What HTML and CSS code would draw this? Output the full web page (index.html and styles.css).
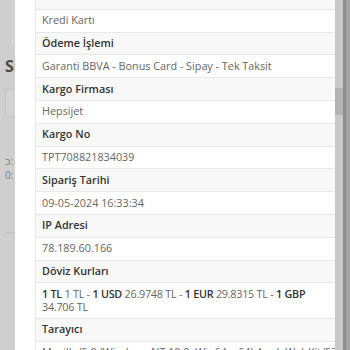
FILE: index.html
```html
<!DOCTYPE html>
<html lang="tr">
<head>
<meta charset="utf-8">
<link rel="stylesheet" href="styles.css">
</head>
<body>
<div class="screen">
  <aside class="under">
    <div class="under-top"></div>
    <div class="under-title">Sipariş</div>
    <div class="under-input"></div>
    <div class="under-line first">ɔ:</div>
    <div class="under-line">0:</div>
    <div class="under-box"></div>
  </aside>
  <section class="modal">
    <table class="details">
      <tr class="lbl cut"><th>Ödeme Yöntemi</th></tr>
      <tr><td>Kredi Kartı</td></tr>
      <tr class="lbl"><th>Ödeme İşlemi</th></tr>
      <tr><td>Garanti BBVA - Bonus Card - Sipay - Tek Taksit</td></tr>
      <tr class="lbl"><th>Kargo Firması</th></tr>
      <tr><td>Hepsijet</td></tr>
      <tr class="lbl"><th>Kargo No</th></tr>
      <tr><td>TPT708821834039</td></tr>
      <tr class="lbl"><th>Sipariş Tarihi</th></tr>
      <tr><td>09-05-2024 16:33:34</td></tr>
      <tr class="lbl"><th>IP Adresi</th></tr>
      <tr><td>78.189.60.166</td></tr>
      <tr class="lbl"><th>Döviz Kurları</th></tr>
      <tr><td class="rates"><b>1 TL</b> 1 TL - <b>1 USD</b> 26.9748 TL - <b>1 EUR</b> 29.8315 TL - <b>1 GBP</b><br>34.706 TL</td></tr>
      <tr class="lbl"><th>Tarayıcı</th></tr>
      <tr><td>Mozilla/5.0 (Windows NT 10.0; Win64; x64) AppleWebKit/537.36</td></tr>
    </table>
  </section>
  <div class="scroll">
    <div class="track"><div class="thumb"></div></div>
    <div class="outer"></div>
  </div>
</div>
</body>
</html>
```

FILE: styles.css
```css
* { box-sizing: border-box; }
html, body { margin: 0; padding: 0; }
body {
  font-family: "Open Sans", "DejaVu Sans", sans-serif;
  background: #cfcfcf;
}
.screen {
  display: flex;
  width: 350px;
  height: 350px;
  overflow: hidden;
}
.under {
  width: 15px;
  flex: none;
  overflow: hidden;
  background: #cfcfcf;
  padding-left: 5px;
  white-space: nowrap;
}
.under-top {
  height: 45px;
  margin-left: 7px;
  border-left: 1px solid #d9d9d9;
}
.under-title {
  margin-top: 12px;
  font-size: 16px;
  font-weight: 700;
  color: #4a4a4a;
  line-height: 18px;
}
.under-input {
  margin-top: 14px;
  height: 28px;
  border: 1px solid #c4c4c4;
  background: #d2d2d2;
  width: 40px;
}
.under-line {
  font-size: 10px;
  color: #808080;
  line-height: 14px;
}
.under-line.first { margin-top: 37px; }
.under-box {
  margin-top: 50px;
  height: 120px;
  border-top: 1px solid #c2c2c2;
  width: 40px;
}
.modal {
  width: 320px;
  flex: none;
  background: #fff;
  padding: 0 21px 0 20px;
  overflow: hidden;
}
.details {
  width: 100%;
  margin-top: -28px;
  border-collapse: collapse;
  border: 1px solid #e8e8e8;
  font-size: 10.8px;
  line-height: 12.8px;
}
.details th, .details td {
  text-align: left;
  padding: 4.5px 6px;
  border: 1px solid #e8e8e8;
}
.details th {
  font-weight: 600;
  color: #333;
}
.details .cut th { padding-bottom: 18.5px; }
.details td {
  color: #666;
  background: #fff;
  white-space: nowrap;
}
.details .rates { letter-spacing: -0.25px; }
.details td b { color: #333; font-weight: 600; }
.lbl th { background: #f8f8f8; }
.scroll {
  width: 15px;
  flex: none;
  display: flex;
}
.track {
  width: 8px;
  background: #c9c9c9;
  padding-top: 88px;
}
.thumb {
  height: 27px;
  background: #b3b3b3;
}
.outer {
  flex: 1;
  background: #a6a6a6;
  border-left: 3px solid #8d8d8d;
}
```
